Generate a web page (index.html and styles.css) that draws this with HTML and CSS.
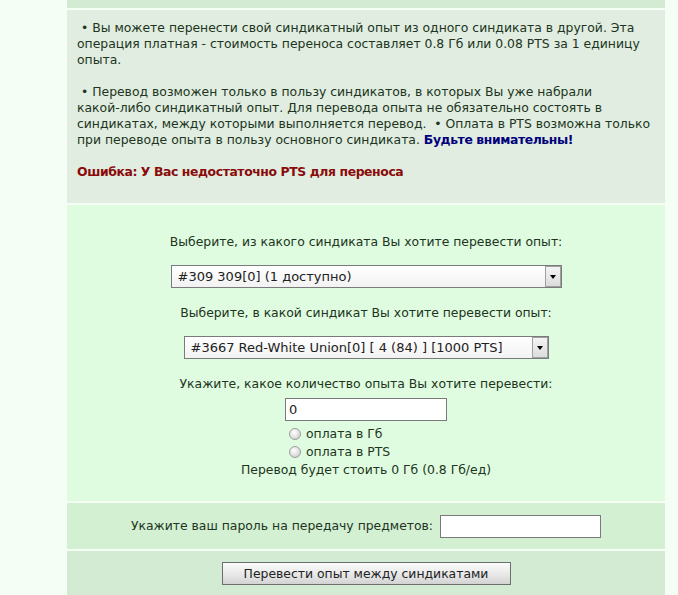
FILE: index.html
```html
<!DOCTYPE html>
<html lang="ru">
<head>
<meta charset="UTF-8">
<title>Перевод синдикатного опыта</title>
<link rel="stylesheet" href="styles.css">
</head>
<body>
  <div class="page">
    <div class="strip"></div>

    <!-- правила переноса -->
    <div class="info">
      &nbsp;• Вы можете перенести свой синдикатный опыт из одного синдиката в другой. Эта операция платная - стоимость переноса составляет 0.8 Гб или 0.08 PTS за 1 единицу опыта.<br><br>
      &nbsp;• Перевод возможен только в пользу синдикатов, в которых Вы уже набрали <span class="nowrap">какой-либо</span> синдикатный опыт. Для перевода опыта не обязательно состоять в синдикатах, между которыми выполняется перевод. &nbsp;• Оплата в PTS возможна только при переводе опыта в пользу основного синдиката. <b class="warn">Будьте внимательны!</b><br><br>
      <b class="error">Ошибка: У Вас недостаточно PTS для переноса</b>
    </div>

    <div class="form">
      <p class="caption">Выберите, из какого синдиката Вы хотите перевести опыт:</p>
      <span class="dropdown">
        <select class="sel sel-from">
          <option>#309 309[0] (1 доступно)</option>
        </select>
        <span class="arrow"></span>
      </span>

      <p class="caption">Выберите, в какой синдикат Вы хотите перевести опыт:</p>
      <span class="dropdown">
        <select class="sel sel-to">
          <option>#3667 Red-White Union[0] [ 4 (84) ] [1000 PTS]</option>
        </select>
        <span class="arrow"></span>
      </span>

      <p class="caption caption-amount">Укажите, какое количество опыта Вы хотите перевести:</p>
      <div class="amount">
        <input type="text" class="field" value="0">
        <label class="pay"><input type="radio" name="pay"> оплата в Гб</label>
        <label class="pay"><input type="radio" name="pay"> оплата в PTS</label>
      </div>
      <div class="cost">Перевод будет стоить 0 Гб (0.8 Гб/ед)</div>
    </div>

    <div class="pass">
      Укажите ваш пароль на передачу предметов:
      <input type="password" class="field field-pass">
    </div>

    <div class="submit">
      <button class="btn">Перевести опыт между синдикатами</button>
    </div>
  </div>
</body>
</html>
```

FILE: styles.css
```css
body {
  margin: 0;
  background-color: #f4fef4;
  font-family: "DejaVu Sans", Verdana, sans-serif;
  font-size: 12.4px;
  line-height: 16px;
  color: #213421;
}

.page {
  width: 598px;
  margin-left: 67px;
  display: flex;
  flex-direction: column;
  gap: 2px;
}

.strip {
  height: 8px;
  background-color: #d3ebd3;
}

/* Блок с правилами */
.info {
  background-color: #e0ede0;
  padding: 10px 10px 23px 10px;
}

.nowrap {
  white-space: nowrap;
}

.warn {
  color: #00007a;
  letter-spacing: -0.4px;
}

.error {
  color: #8b0a0a;
  letter-spacing: -0.4px;
}

/* Основная форма */
.form {
  background-color: #e0fce0;
  padding: 29px 0 23px;
  display: flex;
  flex-direction: column;
  align-items: center;
}

.caption {
  margin: 0 0 15px;
  text-align: center;
}

.dropdown {
  position: relative;
  display: inline-block;
  margin-bottom: 17px;
}

.sel {
  appearance: none;
  -webkit-appearance: none;
  display: block;
  height: 23px;
  border: 1px solid #7a7a7a;
  border-radius: 0;
  background: #fff linear-gradient(#ffffff, #f2f2f2);
  font-family: "DejaVu Sans", Verdana, sans-serif;
  font-size: 13px;
  color: #222;
  padding: 0 20px 0 6px;
  margin: 0;
}

.sel-from {
  width: 391px;
}

.sel-to {
  width: 365px;
}

.arrow {
  position: absolute;
  top: 1px;
  right: 1px;
  width: 16px;
  height: 21px;
  box-sizing: border-box;
  border: 1px solid #a0a0a0;
  background: linear-gradient(#f4f4f4, #dcdcdc);
}

.arrow::after {
  content: "";
  position: absolute;
  left: 4px;
  top: 8px;
  border-left: 3px solid transparent;
  border-right: 3px solid transparent;
  border-top: 4px solid #000;
}

.caption-amount {
  margin-bottom: 6px;
}

.amount {
  width: 162px;
  display: flex;
  flex-direction: column;
  align-items: flex-start;
}

.field {
  box-sizing: border-box;
  width: 162px;
  height: 23px;
  border: 1px solid #7a7a7a;
  background-color: #fff;
  font-family: "DejaVu Sans", Verdana, sans-serif;
  font-size: 13px;
  color: #222;
  padding: 0 3px;
  margin: 0 0 4px;
}

.pay {
  display: flex;
  align-items: center;
  height: 18px;
  padding-left: 4px;
}

.pay input {
  appearance: none;
  -webkit-appearance: none;
  width: 12px;
  height: 12px;
  margin: 0 5px 0 0;
  border: 1px solid #9aa09a;
  border-radius: 50%;
  background: radial-gradient(circle at 40% 35%, #ffffff, #d6d8d6 70%, #b8bcb8);
}

.cost {
  margin-top: 1px;
}

/* Пароль */
.pass {
  background-color: #d3f0d3;
  height: 46px;
  display: flex;
  align-items: center;
  justify-content: center;
  gap: 7px;
}

.field-pass {
  width: 161px;
  margin: 0;
}

/* Кнопка отправки */
.submit {
  background-color: #d2ebd2;
  padding: 11px 0 20px;
  display: flex;
  justify-content: center;
}

.btn {
  width: 289px;
  height: 23px;
  border: 1px solid #6e6e6e;
  background: linear-gradient(#fbfbfb, #e6e6e6 60%, #d2d2d2);
  font-family: "DejaVu Sans", Verdana, sans-serif;
  font-size: 12.4px;
  color: #222;
  padding: 0;
}
```
